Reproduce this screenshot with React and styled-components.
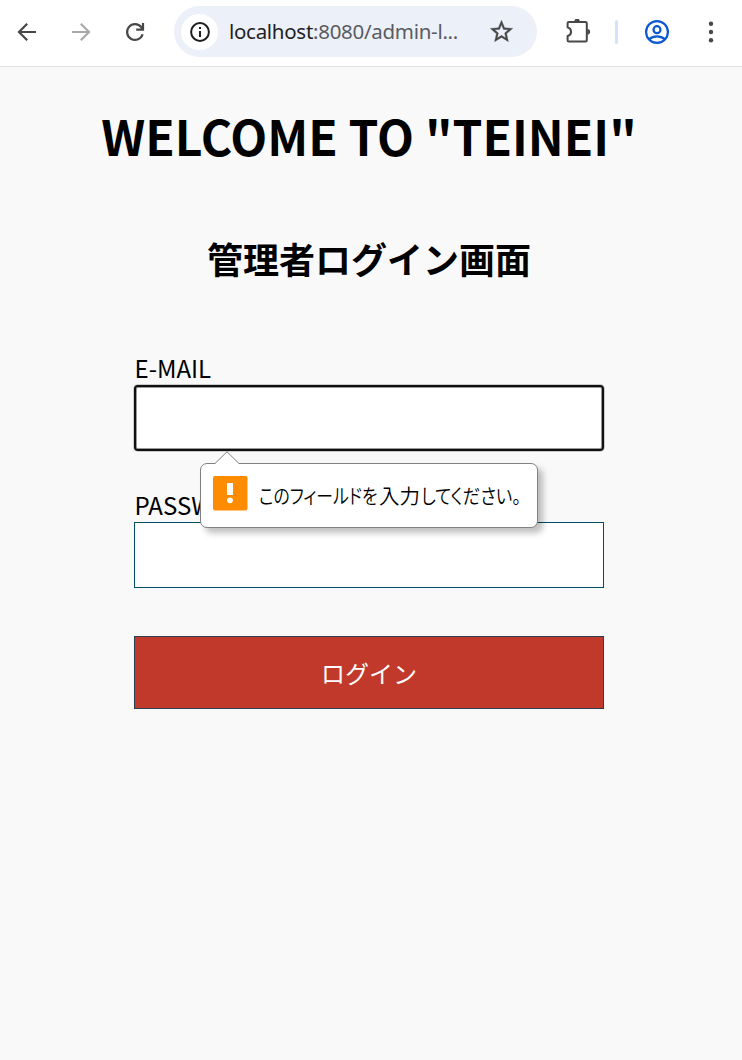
import React from 'react';
import styled, { createGlobalStyle } from 'styled-components';

const GlobalStyle = createGlobalStyle`
  *, *::before, *::after { box-sizing: border-box; }
  body {
    margin: 0;
    background: #f9f9f9;
    color: #000;
    font-family: "Noto Sans CJK JP", sans-serif;
    overflow: hidden;
  }
`;

const Window = styled.div`
  width: 742px;
  height: 1060px;
  display: flex;
  flex-direction: column;
`;

const Toolbar = styled.header`
  height: 67px;
  padding: 6px 19px 0 15px;
  display: flex;
  align-items: flex-start;
  background: #fff;
  border-bottom: 1px solid #e1e1e3;
`;

const ToolButton = styled.span`
  display: flex;
  align-items: center;
  justify-content: center;
  width: 24px;
  height: 52px;
  margin-right: ${(p) => p.$gap || 0}px;
  color: ${(p) => p.$color || '#474747'};
  svg { display: block; flex: none; }
`;

const AddressBar = styled.div`
  display: flex;
  align-items: center;
  width: 363px;
  height: 51px;
  margin: 0 29px 0 27px;
  padding: 0 24px 0 7px;
  border-radius: 26px;
  background: #ecf0f9;
`;

const SiteInfo = styled.span`
  display: flex;
  align-items: center;
  justify-content: center;
  width: 37px;
  height: 36px;
  margin-right: 11px;
  border-radius: 50%;
  background: #fff;
  color: #1f1f1f;
`;

const Url = styled.span`
  flex: 1;
  padding-bottom: 2px;
  font: 20.5px/30px "Noto Sans", sans-serif;
  letter-spacing: -0.29px;
  white-space: nowrap;
  color: #5a5b5f;
`;

const Host = styled.span`
  color: #1f1f1f;
`;

const Divider = styled.span`
  width: 3px;
  height: 24px;
  margin: 14px 27px 0 0;
  border-radius: 2px;
  background: #d3e3fd;
`;

const Page = styled.main`
  flex: 1;
  display: flex;
  flex-direction: column;
  align-items: center;
  padding-right: 4px;
`;

const Title = styled.h1`
  margin: 33px 0 0;
  font-size: 48px;
  line-height: 70px;
  font-weight: 700;
  white-space: nowrap;
`;

const Subtitle = styled.h2`
  margin: 62px 0 0;
  font-size: 36px;
  line-height: 52px;
  font-weight: 700;
`;

const Form = styled.form`
  width: 470px;
  margin-top: 66px;
  display: flex;
  flex-direction: column;
`;

const Field = styled.div`
  position: relative;
  display: flex;
  flex-direction: column;
  margin-bottom: ${(p) => p.$after}px;
`;

const Label = styled.label`
  height: 35px;
  padding-left: 0.5px;
  font-size: 24px;
  line-height: 35px;
`;

const Input = styled.input`
  width: 470px;
  height: 66px;
  padding: 0 12px;
  border: 1px solid #004d66;
  border-radius: 0;
  outline: none;
  background: #fff;
  font: inherit;
`;

const FocusedInput = styled(Input)`
  border: 2px solid #101010;
  border-radius: 4px;
  box-shadow: inset 0 0 0 1px #999, 0 0 0 1px #ccc;
`;

const Submit = styled.button`
  height: 73px;
  padding: 0 0 1px;
  border: 1px solid #2c3e50;
  background: #c0392b;
  color: #fff;
  font: 24px/35px "Noto Sans CJK JP", sans-serif;
`;

const Bubble = styled.div`
  position: absolute;
  z-index: 2;
  top: 113px;
  left: 66px;
  width: 338px;
  height: 65px;
  display: flex;
  align-items: flex-start;
  padding: 12px 0 0 12px;
  border: 1px solid #808080;
  border-radius: 7px;
  background: #fff;
  box-shadow: 5px 5px 6px rgba(0, 0, 0, 0.25);
`;

const Pointer = styled.svg`
  position: absolute;
  top: -13px;
  left: 13px;
`;

const Warning = styled.svg`
  display: block;
  margin-right: 11px;
`;

const Message = styled.span`
  display: flex;
  margin-top: 4px;
  font: 350 20.5px/30px "Noto Sans CJK JP", sans-serif;
  white-space: nowrap;
`;

const Kana = styled.span`
  width: ${(p) => p.$width}px;
  font-feature-settings: "palt";
  transform: scaleX(${(p) => p.$scale});
  transform-origin: left center;
`;

const Kanji = styled.span`
  width: 42px;
`;

function BackArrow() {
  return (
    <svg width="24" height="24" viewBox="0 0 24 24" fill="none" stroke="currentColor" strokeWidth="2.2">
      <path d="M21 12H4.5M12.2 3.8L4 12l8.2 8.2" />
    </svg>
  );
}

function ForwardArrow() {
  return (
    <svg width="24" height="24" viewBox="0 0 24 24" fill="none" stroke="currentColor" strokeWidth="2.2">
      <path d="M3 12h16.5M11.8 3.8L20 12l-8.2 8.2" />
    </svg>
  );
}

function Reload() {
  return (
    <svg width="24" height="24" viewBox="0 0 24 24" fill="none" stroke="currentColor" strokeWidth="2.2">
      <path d="M19.6 14.2A7.9 7.9 0 1 1 18.3 7.2L20 9.2M20 3v6.7h-6.8" />
    </svg>
  );
}

function Info() {
  return (
    <svg width="22" height="22" viewBox="0 0 22 22" fill="none" stroke="currentColor" strokeWidth="2">
      <circle cx="11" cy="11" r="8.9" />
      <path d="M11 10v6M11 6v2.1" />
    </svg>
  );
}

function Star() {
  return (
    <svg width="27" height="27" viewBox="0 0 24 24" fill="currentColor">
      <path d="M22 9.24l-7.19-.62L12 2 9.19 8.63 2 9.24l5.46 4.73L5.82 21 12 17.27 18.18 21l-1.63-7.03L22 9.24zM12 15.4l-3.76 2.27 1-4.28-3.32-2.88 4.38-.38L12 6.1l1.71 4.04 4.38.38-3.32 2.88 1 4.28L12 15.4z" stroke="currentColor" strokeWidth=".3" />
    </svg>
  );
}

function Puzzle() {
  return (
    <svg width="26" height="26" viewBox="0 0 26 26">
      <path
        d="M2.6 4.3q0-1.3 1.3-1.3h16.6q1.3 0 1.3 1.3v16.9q0 1.3-1.3 1.3h-16.6q-1.3 0-1.3-1.3v-4.2c4.6-1.2 4.6-7.4 0-8.6z"
        fill="none"
        stroke="currentColor"
        strokeWidth="2"
        strokeLinejoin="round"
      />
      <path d="M9.3 2.5a2.8 2.8 0 0 1 5.6 0zM22.3 10a2.8 2.8 0 0 1 0 5.6z" fill="currentColor" />
    </svg>
  );
}

function Profile() {
  return (
    <svg width="26" height="26" viewBox="0 0 26 26" fill="none" stroke="currentColor" strokeWidth="2.2">
      <circle cx="13" cy="13" r="10.9" />
      <circle cx="13" cy="10.7" r="3.5" />
      <path d="M5.2 20.2c4.4-3.8 11.2-3.8 15.6 0" />
    </svg>
  );
}

function Menu() {
  return (
    <svg width="6" height="24" viewBox="0 0 6 24" fill="currentColor">
      <circle cx="3" cy="3.8" r="2.2" />
      <circle cx="3" cy="12" r="2.2" />
      <circle cx="3" cy="20.2" r="2.2" />
    </svg>
  );
}

export default function App() {
  return (
    <Window>
      <GlobalStyle />
      <Toolbar>
        <ToolButton $gap={30}><BackArrow /></ToolButton>
        <ToolButton $gap={30} $color="#a9a9a9"><ForwardArrow /></ToolButton>
        <ToolButton><Reload /></ToolButton>
        <AddressBar>
          <SiteInfo><Info /></SiteInfo>
          <Url><Host>localhost</Host>:8080/admin-l...</Url>
          <ToolButton><Star /></ToolButton>
        </AddressBar>
        <ToolButton $gap={25}><Puzzle /></ToolButton>
        <Divider />
        <ToolButton $gap={30} $color="#0b57d0"><Profile /></ToolButton>
        <ToolButton><Menu /></ToolButton>
      </Toolbar>
      <Page>
        <Title>WELCOME TO "TEINEI"</Title>
        <Subtitle>管理者ログイン画面</Subtitle>
        <Form noValidate onSubmit={(e) => e.preventDefault()}>
          <Field $after={36}>
            <Label htmlFor="email">E-MAIL</Label>
            <FocusedInput id="email" type="email" />
            <Bubble role="alert">
              <Pointer width="26" height="14" viewBox="0 0 26 14">
                <path d="M1 14V12.5L13 .8 25 12.5V14z" fill="#fff" />
                <path d="M1 12.5L13 .8 25 12.5" fill="none" stroke="#808080" />
              </Pointer>
              <Warning width="35" height="35" viewBox="0 0 35 35">
                <rect width="34.5" height="34.5" rx="2" fill="#ff8c00" />
                <rect x="14" y="7" width="6" height="12" fill="#fff" />
                <circle cx="17" cy="24.3" r="2.9" fill="#fff" />
              </Warning>
              <Message>
                <Kana $width={120} $scale={0.82}>このフィールドを</Kana>
                <Kanji>入力</Kanji>
                <Kana $width={100} $scale={0.85}>してください。</Kana>
              </Message>
            </Bubble>
          </Field>
          <Field $after={48}>
            <Label htmlFor="password">PASSWORD</Label>
            <Input id="password" type="password" />
          </Field>
          <Submit type="submit">ログイン</Submit>
        </Form>
      </Page>
    </Window>
  );
}
